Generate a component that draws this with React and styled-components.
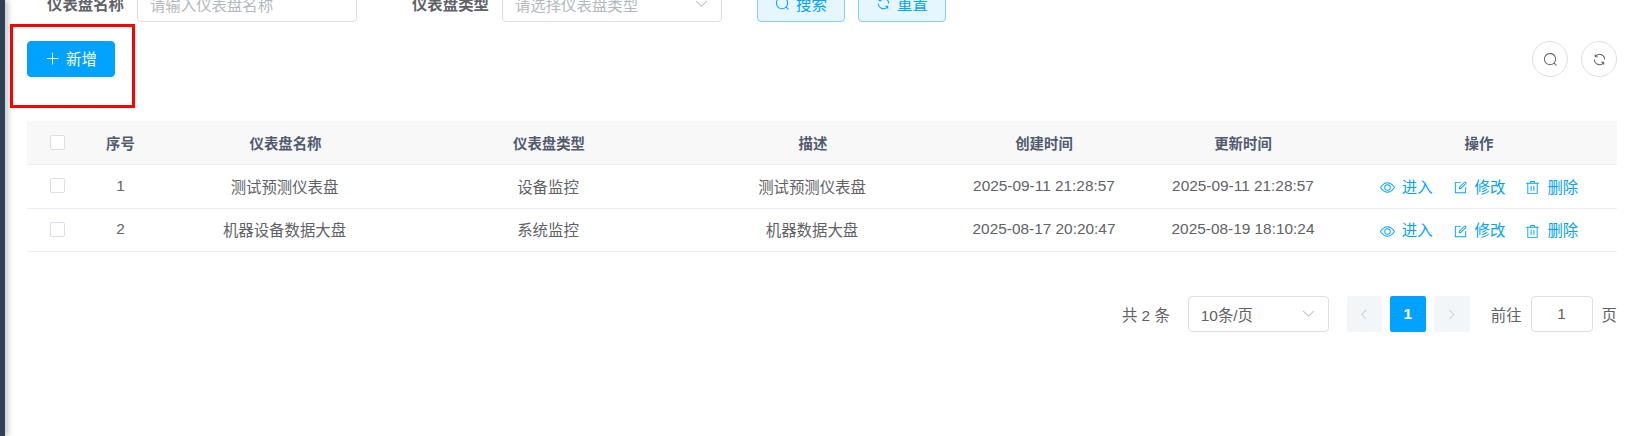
import React from 'react';
import styled, { createGlobalStyle } from 'styled-components';

const FONT = '"Liberation Sans", "Noto Sans CJK SC", sans-serif';
const BLUE = '#00a2ff';

const paths = {
  search: 'm795.904 750.72 124.992 124.928a32 32 0 0 1-45.248 45.248L750.656 795.904a416 416 0 1 1 45.248-45.248zM480 832a352 352 0 1 0 0-704 352 352 0 0 0 0 704z',
  refresh: 'M771.776 794.88A384 384 0 0 1 128 512h64a320 320 0 0 0 555.712 216.448H654.72a32 32 0 1 1 0-64h149.056a32 32 0 0 1 32 32v148.928a32 32 0 1 1-64 0v-50.56zM276.288 295.616h92.992a32 32 0 0 1 0 64H220.16a32 32 0 0 1-32-32V178.56a32 32 0 0 1 64 0v50.56A384 384 0 0 1 896.128 512h-64a320 320 0 0 0-555.776-216.384z',
  plus: 'M480 480V128a32 32 0 0 1 64 0v352h352a32 32 0 0 1 0 64H544v352a32 32 0 1 1-64 0V544H128a32 32 0 0 1 0-64h352z',
  view: 'M512 160c320 0 512 352 512 352S832 864 512 864 0 512 0 512s192-352 512-352zm0 64c-225.28 0-384.128 208.064-436.8 288 52.608 79.872 211.456 288 436.8 288 225.28 0 384.128-208.064 436.8-288-52.608-79.872-211.456-288-436.8-288zm0 64a224 224 0 1 1 0 448 224 224 0 0 1 0-448zm0 64a160.192 160.192 0 0 0-160 160c0 88.192 71.744 160 160 160s160-71.808 160-160-71.744-160-160-160z',
  edit: 'M832 512a32 32 0 1 1 64 0v352a32 32 0 0 1-32 32H160a32 32 0 0 1-32-32V160a32 32 0 0 1 32-32h352a32 32 0 0 1 0 64H192v640h640V512zM469.952 554.24l52.8-7.552L847.104 222.4a32 32 0 1 0-45.248-45.248L477.44 501.44l-7.552 52.8zm422.4-422.4a96 96 0 0 1 0 135.808l-331.84 331.84a32 32 0 0 1-18.112 9.088L436.8 623.68a32 32 0 0 1-36.224-36.224l15.104-105.6a32 32 0 0 1 9.024-18.112l331.904-331.84a96 96 0 0 1 135.744 0z',
  trash: 'M160 256H96a32 32 0 0 1 0-64h256V95.936a32 32 0 0 1 32-32h256a32 32 0 0 1 32 32V192h256a32 32 0 1 1 0 64h-64v672a32 32 0 0 1-32 32H192a32 32 0 0 1-32-32V256zm448-64v-64H416v64h192zM224 896h576V256H224v640zm192-128a32 32 0 0 1-32-32V416a32 32 0 0 1 64 0v320a32 32 0 0 1-32 32zm192 0a32 32 0 0 1-32-32V416a32 32 0 0 1 64 0v320a32 32 0 0 1-32 32z',
  down: 'M831.872 340.864 512 652.672 192.128 340.864a30.592 30.592 0 0 0-42.752 0 29.12 29.12 0 0 0 0 41.6L489.664 714.24a32 32 0 0 0 44.672 0l340.288-331.712a29.12 29.12 0 0 0 0-41.728 30.592 30.592 0 0 0-42.752 0z',
  left: 'M609.408 149.376 277.76 489.6a32 32 0 0 0 0 44.672l331.648 340.352a29.12 29.12 0 0 0 41.728 0 30.592 30.592 0 0 0 0-42.752L339.264 512l311.872-319.872a30.592 30.592 0 0 0 0-42.688 29.12 29.12 0 0 0-41.728-.064z',
  right: 'M340.864 149.312a30.592 30.592 0 0 0 0 42.752L652.736 512 340.864 831.872a30.592 30.592 0 0 0 0 42.752 29.12 29.12 0 0 0 41.728 0L714.24 534.336a32 32 0 0 0 0-44.672L382.592 149.376a29.12 29.12 0 0 0-41.728 0z',
};

const GlobalStyle = createGlobalStyle`
  html, body {
    margin: 0;
    padding: 0;
    background: #fff;
  }
  body {
    font-family: ${FONT};
    font-size: 15.4px;
    color: #606266;
  }
`;

const Page = styled.div`
  display: flex;
  height: 436px;
  overflow: hidden;
`;
const Aside = styled.div`
  flex: 0 0 5px;
  background: #304156;
  box-shadow: 2px 0 6px rgba(0, 21, 41, 0.35);
`;
const Main = styled.div`
  flex: 1;
  min-width: 0;
  padding: 0 22px;
`;
const SearchForm = styled.div`
  display: flex;
  align-items: center;
  height: 36px;
  margin-top: -14px;
  padding-left: 20px;
`;
const FormLabel = styled.span`
  margin: 0 13px 2px 0;
  font-weight: 700;
  color: #606266;
  white-space: nowrap;
`;
const FieldBox = styled.div`
  box-sizing: border-box;
  display: flex;
  align-items: center;
  justify-content: space-between;
  width: ${(p) => p.$width}px;
  height: 36px;
  margin-right: ${(p) => p.$gap || 0}px;
  padding: 0 12px 1px;
  background: #fff;
  border: 1px solid #dcdfe6;
  border-radius: 4px;
  color: ${(p) => (p.$filled ? '#606266' : '#b4b7bd')};
`;
const LightButton = styled.button`
  box-sizing: border-box;
  display: flex;
  align-items: center;
  justify-content: center;
  gap: 6px;
  width: ${(p) => p.$width}px;
  height: 36px;
  margin-right: ${(p) => p.$gap || 0}px;
  padding: 0 0 2px;
  font: inherit;
  color: ${BLUE};
  background: #e6f6ff;
  border: 1px solid #80d0ff;
  border-radius: 4px;
`;
const Toolbar = styled.div`
  position: relative;
  display: flex;
  align-items: flex-start;
  justify-content: space-between;
  height: 80px;
  padding-top: 19px;
`;
const AddButton = styled.button`
  box-sizing: border-box;
  display: flex;
  align-items: center;
  justify-content: center;
  gap: 6px;
  width: 88px;
  height: 36px;
  padding: 0 0 2px;
  font: inherit;
  color: #fff;
  background: ${BLUE};
  border: 1px solid ${BLUE};
  border-radius: 4px;
`;
const Highlight = styled.div`
  position: absolute;
  left: -17px;
  top: 2px;
  box-sizing: border-box;
  width: 125px;
  height: 84px;
  border: 3px solid #f00;
  pointer-events: none;
`;
const CircleGroup = styled.div`
  display: flex;
  gap: 13px;
`;
const CircleButton = styled.button`
  box-sizing: border-box;
  display: flex;
  align-items: center;
  justify-content: center;
  width: 36px;
  height: 36px;
  padding: 0;
  color: #606266;
  background: #fff;
  border: 1px solid #dcdfe6;
  border-radius: 50%;
`;
const Row = styled.div`
  display: grid;
  grid-template-columns: 60px 67px 261px 266px 262px 202px 196px 276px;
  align-items: center;
  height: ${(p) => (p.$head ? 44 : 43.5)}px;
  box-sizing: border-box;
  padding-bottom: 1px;
  border-bottom: 1px solid #ebeef5;
  background: ${(p) => (p.$head ? '#f8f8f9' : '#fff')};
  font-size: ${(p) => (p.$head ? 14.4 : 15.4)}px;
  font-weight: ${(p) => (p.$head ? 700 : 400)};
  color: ${(p) => (p.$head ? '#515a6e' : '#606266')};
`;
const Cell = styled.div`
  display: flex;
  justify-content: center;
  align-items: center;
  white-space: nowrap;
`;
const WideHeadCell = styled(Cell)`
  padding-left: 2px;
`;
const CheckBox = styled.span`
  box-sizing: border-box;
  width: 15px;
  height: 15px;
  background: #fff;
  border: 1px solid #dcdfe6;
  border-radius: 2px;
`;
const Actions = styled.div`
  display: flex;
  justify-content: center;
  gap: 20px;
`;
const ActionLink = styled.span`
  display: flex;
  align-items: center;
  gap: 7px;
  color: ${BLUE};

  svg {
    margin-top: 4px;
  }
`;
const Pagination = styled.div`
  display: flex;
  align-items: center;
  justify-content: flex-end;
  margin-top: 44px;
`;
const PagerText = styled.span`
  margin: ${(p) => p.$margin};
  white-space: nowrap;
`;
const PageButton = styled.div`
  display: flex;
  align-items: center;
  justify-content: center;
  width: ${(p) => p.$width || 36}px;
  height: 36px;
  margin-right: ${(p) => p.$gap || 0}px;
  border-radius: 2px;
  font-weight: 700;
  color: ${(p) => (p.$active ? '#fff' : '#c0c4cc')};
  background: ${(p) => (p.$active ? BLUE : '#f3f6f9')};
`;
const JumpBox = styled(FieldBox)`
  justify-content: center;
`;

function Icon({ name, size = 15, color = 'currentColor' }) {
  return (
    <svg width={size} height={size} viewBox="0 0 1024 1024" fill={color}>
      <path d={paths[name]} />
    </svg>
  );
}

const rows = [
  { id: 1, name: '测试预测仪表盘', type: '设备监控', desc: '测试预测仪表盘', created: '2025-09-11 21:28:57', updated: '2025-09-11 21:28:57' },
  { id: 2, name: '机器设备数据大盘', type: '系统监控', desc: '机器数据大盘', created: '2025-08-17 20:20:47', updated: '2025-08-19 18:10:24' },
];

export default function App() {
  return (
    <Page>
      <GlobalStyle />
      <Aside />
      <Main>
        <SearchForm>
          <FormLabel>仪表盘名称</FormLabel>
          <FieldBox $width={220} $gap={55}>请输入仪表盘名称</FieldBox>
          <FormLabel>仪表盘类型</FormLabel>
          <FieldBox $width={220} $gap={35}>
            请选择仪表盘类型
            <Icon name="down" size={15} color="#b4b7bd" />
          </FieldBox>
          <LightButton $width={88} $gap={13}><Icon name="search" />搜索</LightButton>
          <LightButton $width={88}><Icon name="refresh" />重置</LightButton>
        </SearchForm>
        <Toolbar>
          <AddButton><Icon name="plus" />新增</AddButton>
          <Highlight />
          <CircleGroup>
            <CircleButton><Icon name="search" /></CircleButton>
            <CircleButton><Icon name="refresh" /></CircleButton>
          </CircleGroup>
        </Toolbar>
        <Row $head>
          <Cell><CheckBox /></Cell>
          <Cell>序号</Cell>
          <WideHeadCell>仪表盘名称</WideHeadCell>
          <WideHeadCell>仪表盘类型</WideHeadCell>
          <WideHeadCell>描述</WideHeadCell>
          <Cell>创建时间</Cell>
          <Cell>更新时间</Cell>
          <Cell>操作</Cell>
        </Row>
        {rows.map((row) => (
          <Row key={row.id}>
            <Cell><CheckBox /></Cell>
            <Cell>{row.id}</Cell>
            <Cell>{row.name}</Cell>
            <Cell>{row.type}</Cell>
            <Cell>{row.desc}</Cell>
            <Cell>{row.created}</Cell>
            <Cell>{row.updated}</Cell>
            <Cell>
              <Actions>
                <ActionLink><Icon name="view" />进入</ActionLink>
                <ActionLink><Icon name="edit" />修改</ActionLink>
                <ActionLink><Icon name="trash" />删除</ActionLink>
              </Actions>
            </Cell>
          </Row>
        ))}
        <Pagination>
          <PagerText $margin="0 18px 0 0">共 2 条</PagerText>
          <FieldBox $width={141} $gap={18} $filled>
            10条/页
            <Icon name="down" size={15} color="#b4b7bd" />
          </FieldBox>
          <PageButton $width={35} $gap={8}><Icon name="left" size={13} /></PageButton>
          <PageButton $gap={8} $active>1</PageButton>
          <PageButton><Icon name="right" size={13} /></PageButton>
          <PagerText $margin="0 9px 0 21px">前往</PagerText>
          <JumpBox $width={62} $filled>1</JumpBox>
          <PagerText $margin="0 0 0 9px">页</PagerText>
        </Pagination>
      </Main>
    </Page>
  );
}
